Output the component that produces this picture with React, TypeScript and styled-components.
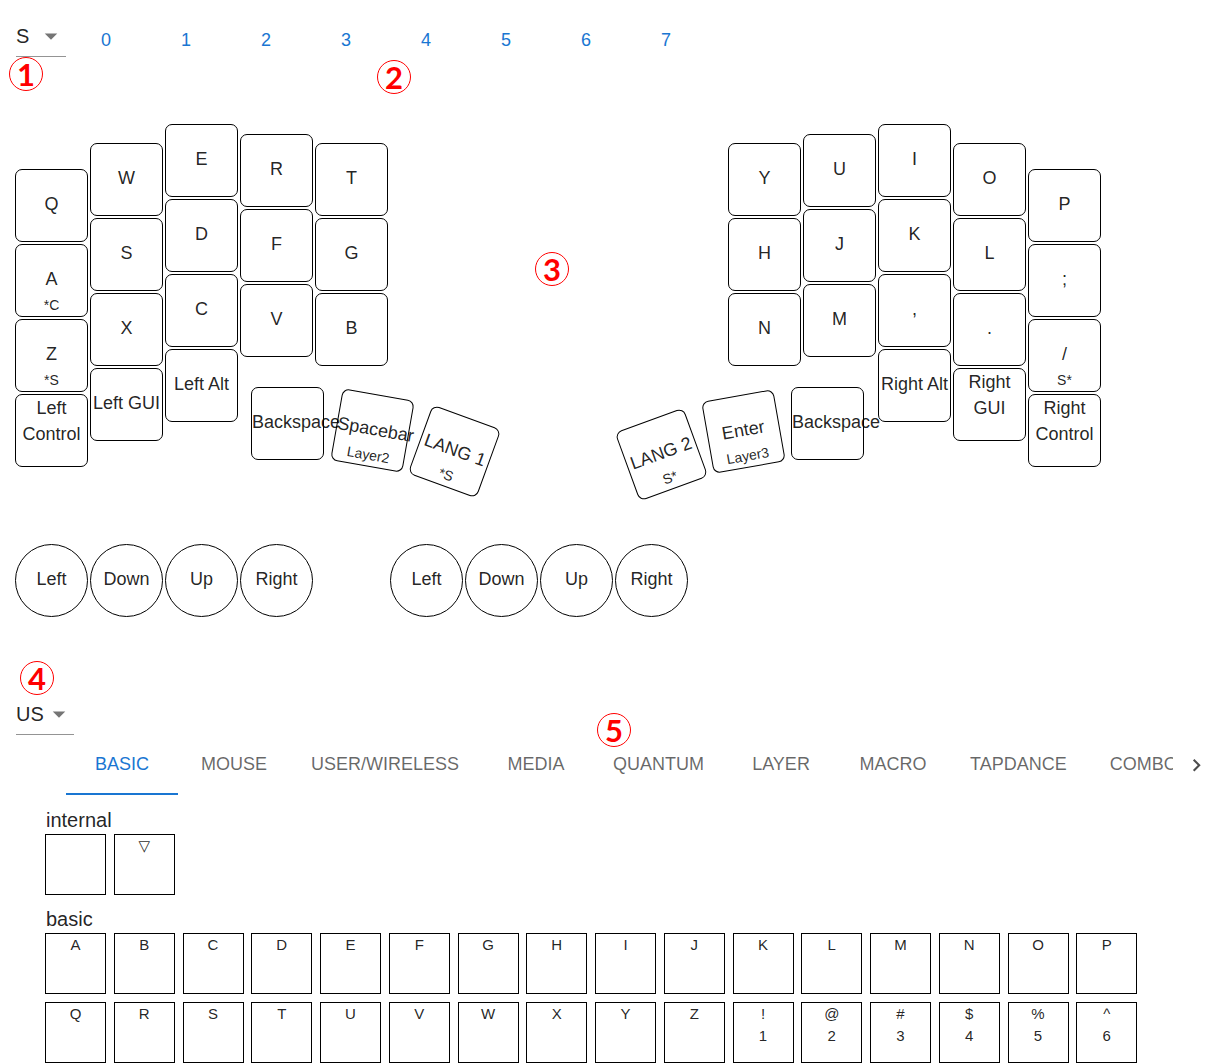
import React, { useState } from "react";
import styled, { createGlobalStyle } from "styled-components";

const Global = createGlobalStyle`
  *, *::before, *::after { box-sizing: border-box; }
  body {
    margin: 0;
    background: #fff;
    color: rgba(0, 0, 0, 0.87);
    font-family: "Liberation Sans", Arial, "DejaVu Sans", sans-serif;
  }
  button, select { font: inherit; color: inherit; }
`;

/* ---------- data ---------- */

type KeyDef = {
  label: string;
  sub?: string;
  angle?: number;
  drop?: number;
  lead?: number;
};
type ColumnDef = { drop: number; keys: KeyDef[] };

const k = (label: string, sub?: string): KeyDef => ({ label, sub });

const leftOuter: ColumnDef[] = [
  { drop: 45, keys: [k("Q"), k("A", "*C"), k("Z", "*S"), k("Left Control")] },
  { drop: 19, keys: [k("W"), k("S"), k("X"), k("Left GUI")] },
  { drop: 0, keys: [k("E"), k("D"), k("C"), k("Left Alt")] },
];
const leftInner: ColumnDef[] = [
  { drop: 10, keys: [k("R"), k("F"), k("V")] },
  { drop: 19, keys: [k("T"), k("G"), k("B")] },
];
const leftThumb: KeyDef[] = [
  { label: "Backspace" },
  { label: "Spacebar", sub: "Layer2", angle: 10, drop: 7, lead: 12 },
  { label: "LANG 1", sub: "*S", angle: 20, drop: 28, lead: 9 },
];
const rightInner: ColumnDef[] = [
  { drop: 19, keys: [k("Y"), k("H"), k("N")] },
  { drop: 10, keys: [k("U"), k("J"), k("M")] },
];
const rightOuter: ColumnDef[] = [
  { drop: 0, keys: [k("I"), k("K"), k(","), k("Right Alt")] },
  { drop: 19, keys: [k("O"), k("L"), k("."), k("Right GUI")] },
  { drop: 45, keys: [k("P"), k(";"), k("/", "S*"), k("Right Control")] },
];
const rightThumb: KeyDef[] = [
  { label: "LANG 2", sub: "S*", angle: -20, drop: 31 },
  { label: "Enter", sub: "Layer3", angle: -10, drop: 8, lead: 9 },
  { label: "Backspace", lead: 11 },
];
const encoderKeys = ["Left", "Down", "Up", "Right"];
const layers = [0, 1, 2, 3, 4, 5, 6, 7];
const tabs = [
  "BASIC", "MOUSE", "USER/WIRELESS", "MEDIA", "QUANTUM",
  "LAYER", "MACRO", "TAPDANCE", "COMBO",
];
const palette: { title: string; keys: string[][] }[] = [
  { title: "internal", keys: [[""], ["▽"]] },
  {
    title: "basic",
    keys: [
      ..."ABCDEFGHIJKLMNOPQRSTUVWXYZ".split("").map((c) => [c]),
      ["!", "1"], ["@", "2"], ["#", "3"], ["$", "4"], ["%", "5"], ["^", "6"],
    ],
  },
];

/* ---------- shared parts ---------- */

const Marker = styled.span<{ $x: number; $y: number }>`
  position: absolute;
  left: ${(p) => p.$x}px;
  top: ${(p) => p.$y}px;
  display: flex;
  align-items: center;
  justify-content: center;
  width: 34px;
  height: 34px;
  border: 1px solid #f00;
  border-radius: 50%;
  color: #f00;
  font: 700 31px/32px Lato, sans-serif;
  pointer-events: none;
`;

const SelectBox = styled.label`
  display: inline-grid;
  align-items: center;
  border-bottom: 1px solid #949494;
`;

const SelectInput = styled.select`
  grid-area: 1 / 1;
  appearance: none;
  min-width: 50px;
  height: 40px;
  padding: 0 30px 0 0;
  border: 0;
  border-radius: 0;
  background: transparent;
  font-size: 20px;
  cursor: pointer;
`;

const Caret = styled.svg`
  grid-area: 1 / 1;
  justify-self: end;
  width: 30px;
  height: 30px;
  fill: #757575;
  pointer-events: none;
`;

function Picker(props: { name: string; options: string[] }) {
  return (
    <SelectBox>
      <SelectInput aria-label={props.name}>
        {props.options.map((o) => (
          <option key={o}>{o}</option>
        ))}
      </SelectInput>
      <Caret viewBox="0 0 24 24" aria-hidden="true">
        <path d="M7 10l5 5 5-5z" />
      </Caret>
    </SelectBox>
  );
}

/* ---------- header ---------- */

const Header = styled.header`
  position: relative;
  display: flex;
  align-items: flex-start;
  padding: 16px 16px 0;
`;

const LayerButton = styled.button`
  width: 80px;
  height: 48px;
  padding: 0;
  border: 0;
  background: transparent;
  color: #1976d2;
  font-size: 18px;
  line-height: 48px;
  cursor: pointer;
`;

/* ---------- keyboard ---------- */

const Keyboard = styled.main`
  position: relative;
  padding: 60px 15px 0;
`;

const Halves = styled.div`
  display: flex;
  gap: 134px;
`;

const Half = styled.div`
  display: flex;
  gap: 2px;
`;

const InnerBlock = styled.div`
  display: flex;
  flex-direction: column;
  gap: 21px;
`;

const Columns = styled.div<{ $end?: boolean }>`
  display: flex;
  gap: 2px;
  justify-content: ${(p) => (p.$end ? "flex-end" : "flex-start")};
`;

const Column = styled.div<{ $drop: number }>`
  display: flex;
  flex-direction: column;
  gap: 2px;
  padding-top: ${(p) => p.$drop}px;
`;

const ThumbRow = styled.div<{ $side: "left" | "right" }>`
  display: flex;
  align-items: flex-start;
  padding: ${(p) => (p.$side === "left" ? "0 0 0 11px" : "0 12px 0 0")};
`;

const Cap = styled.button<{
  $round?: boolean;
  $angle?: number;
  $drop?: number;
  $lead?: number;
}>`
  display: flex;
  flex-direction: column;
  flex: none;
  width: 73px;
  height: 73px;
  margin: ${(p) => p.$drop ?? 0}px 0 0 ${(p) => p.$lead ?? 0}px;
  padding: 0;
  border: 1px solid #000;
  border-radius: ${(p) => (p.$round ? "50%" : "7px")};
  background: transparent;
  transform: ${(p) => (p.$angle ? `rotate(${p.$angle}deg)` : "none")};
  cursor: pointer;

  /* room above a one-line legend; gives way to a second line */
  &::before {
    content: "";
    flex: 0 1 21px;
  }
`;

const Legend = styled.span`
  flex: none;
  font-size: 18px;
  line-height: 26px;
  text-align: center;
`;

const SubLegend = styled.span`
  flex: 0 0 19px;
  min-height: 0;
  font-size: 14px;
  line-height: 26px;
  text-align: center;
`;

const Encoders = styled.div`
  display: flex;
  gap: 77px;
  padding-top: 53px;
`;

function KeyCap({ def, round }: { def: KeyDef; round?: boolean }) {
  return (
    <Cap $round={round} $angle={def.angle} $drop={def.drop} $lead={def.lead}>
      <Legend>{def.label}</Legend>
      <SubLegend>{def.sub}</SubLegend>
    </Cap>
  );
}

function ColumnSet({ cols, end }: { cols: ColumnDef[]; end?: boolean }) {
  return (
    <Columns $end={end}>
      {cols.map((c) => (
        <Column key={c.keys[0].label} $drop={c.drop}>
          {c.keys.map((d) => (
            <KeyCap key={d.label} def={d} />
          ))}
        </Column>
      ))}
    </Columns>
  );
}

/* ---------- palette ---------- */

const Palette = styled.section`
  position: relative;
  padding-top: 77px;
`;

const LanguageRow = styled.div`
  display: flex;
  padding-left: 16px;
`;

const TabBar = styled.nav`
  display: flex;
  padding-left: 66px;
`;

const TabList = styled.div`
  display: flex;
  flex: 1;
  min-width: 0;
  overflow: hidden;
`;

const Tab = styled.button<{ $active: boolean }>`
  flex: none;
  min-width: 112px;
  height: 60px;
  padding: 0 21px 2px;
  border: 0;
  background: transparent;
  box-shadow: ${(p) => (p.$active ? "inset 0 -2px #1976d2" : "none")};
  color: ${(p) => (p.$active ? "#1976d2" : "rgba(0, 0, 0, 0.6)")};
  font-size: 18px;
  cursor: pointer;
`;

const ScrollButton = styled.button`
  display: flex;
  align-items: center;
  justify-content: center;
  flex: none;
  width: 47px;
  padding: 0;
  border: 0;
  background: transparent;
  cursor: pointer;
`;

const Chevron = styled.svg`
  width: 25px;
  height: 25px;
  fill: rgba(0, 0, 0, 0.7);
`;

const Groups = styled.div`
  display: flex;
  flex-direction: column;
  gap: 10px;
  padding: 11px 75px 0 45px;
`;

const GroupTitle = styled.h2`
  margin: 0;
  padding-left: 1px;
  font-size: 20px;
  font-weight: 400;
  line-height: 28px;
`;

const KeyGrid = styled.div`
  display: grid;
  grid-template-columns: repeat(auto-fill, minmax(68px, 1fr));
  row-gap: 8px;
`;

const PaletteKey = styled.button`
  display: flex;
  flex-direction: column;
  align-items: center;
  width: 61px;
  height: 61px;
  padding: 0;
  border: 1px solid #000;
  background: transparent;
  font-size: 15px;
  line-height: 22px;
  cursor: pointer;
`;

export default function App() {
  const [active, setActive] = useState("BASIC");
  return (
    <>
      <Global />
      <Header>
        <Picker name="Size" options={["S", "M", "L"]} />
        {layers.map((n) => (
          <LayerButton key={n}>{n}</LayerButton>
        ))}
        <Marker $x={9} $y={57}>1</Marker>
        <Marker $x={377} $y={60}>2</Marker>
      </Header>

      <Keyboard>
        <Halves>
          <Half>
            <ColumnSet cols={leftOuter} />
            <InnerBlock>
              <ColumnSet cols={leftInner} />
              <ThumbRow $side="left">
                {leftThumb.map((d) => (
                  <KeyCap key={d.label} def={d} />
                ))}
              </ThumbRow>
            </InnerBlock>
          </Half>
          <Half>
            <InnerBlock>
              <ColumnSet cols={rightInner} end />
              <ThumbRow $side="right">
                {rightThumb.map((d) => (
                  <KeyCap key={d.label} def={d} />
                ))}
              </ThumbRow>
            </InnerBlock>
            <ColumnSet cols={rightOuter} />
          </Half>
        </Halves>
        <Encoders>
          {["first", "second"].map((id) => (
            <Columns key={id}>
              {encoderKeys.map((label) => (
                <KeyCap key={label} def={{ label }} round />
              ))}
            </Columns>
          ))}
        </Encoders>
        <Marker $x={535} $y={188}>3</Marker>
      </Keyboard>

      <Palette>
        <LanguageRow>
          <Picker name="Keyboard language" options={["US", "JP"]} />
        </LanguageRow>
        <TabBar>
          <TabList role="tablist">
            {tabs.map((t) => (
              <Tab
                key={t}
                role="tab"
                aria-selected={t === active}
                $active={t === active}
                onClick={() => setActive(t)}
              >
                {t}
              </Tab>
            ))}
          </TabList>
          <ScrollButton aria-label="Scroll tabs right">
            <Chevron viewBox="0 0 24 24" aria-hidden="true">
              <path d="M8.59 16.34l4.58-4.59-4.58-4.59L10 5.75l6 6-6 6z" />
            </Chevron>
          </ScrollButton>
        </TabBar>
        <Groups>
          {palette.map((g) => (
            <div key={g.title}>
              <GroupTitle>{g.title}</GroupTitle>
              <KeyGrid>
                {g.keys.map((lines) => (
                  <PaletteKey key={lines[0]} aria-label={lines[0] || "None"}>
                    {lines.map((l) => (
                      <span key={l}>{l}</span>
                    ))}
                  </PaletteKey>
                ))}
              </KeyGrid>
            </div>
          ))}
        </Groups>
        <Marker $x={20} $y={44}>4</Marker>
        <Marker $x={597} $y={96}>5</Marker>
      </Palette>
    </>
  );
}
